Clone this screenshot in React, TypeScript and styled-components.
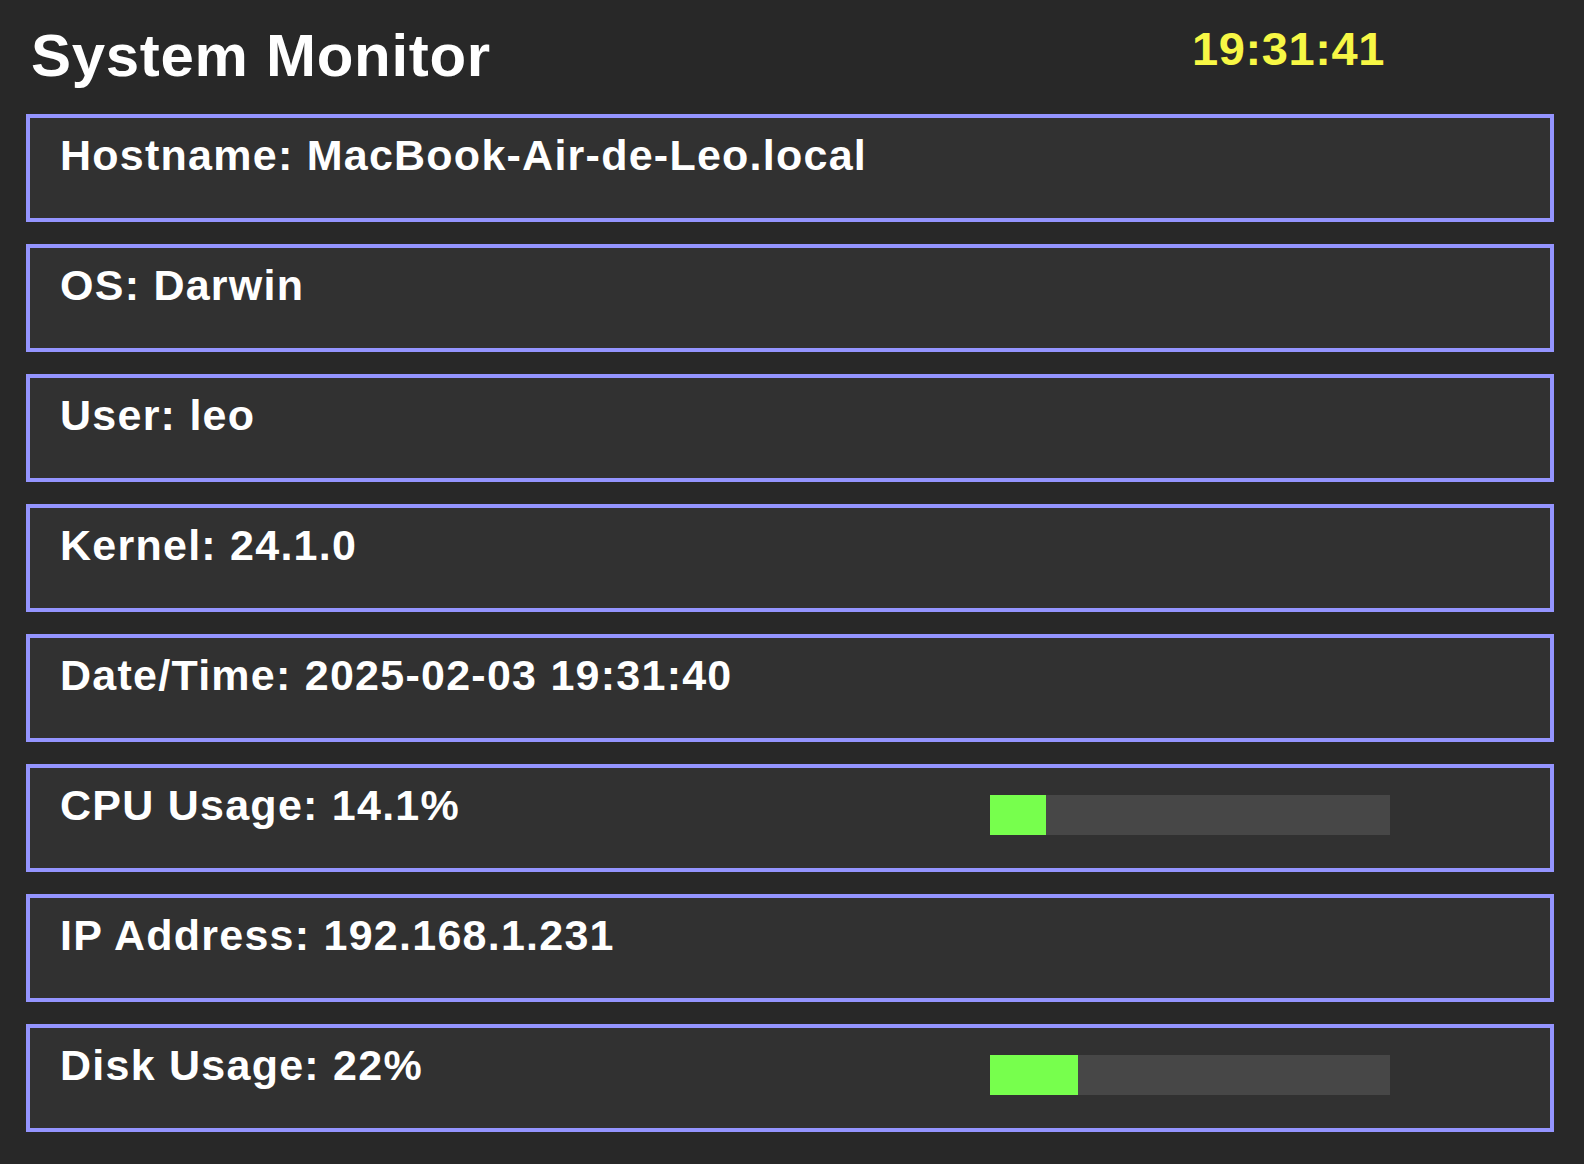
import React from "react";
import styled, { createGlobalStyle } from "styled-components";

const GlobalStyle = createGlobalStyle`
  html, body {
    margin: 0;
    padding: 0;
    background: #282828;
  }
  body {
    font-family: "Liberation Sans", Arial, Helvetica, sans-serif;
    color: #ffffff;
  }
`;

const Page = styled.div`
  min-height: 100vh;
  box-sizing: border-box;
  padding: 0 30px 32px 26px;
  background: #282828;
`;

const Header = styled.header`
  height: 114px;
  display: grid;
  grid-template-columns: 1161px auto;
  align-items: start;
  padding-left: 5px;
  box-sizing: border-box;
`;

const Title = styled.h1`
  margin: 26px 0 0 0;
  font-size: 60px;
  line-height: 60px;
  font-weight: 700;
  letter-spacing: 0.7px;
  color: #ffffff;
`;

const Clock = styled.div`
  margin-top: 25px;
  font-size: 47px;
  line-height: 47px;
  font-weight: 700;
  letter-spacing: 0.6px;
  color: #f7f745;
`;

const List = styled.div`
  display: flex;
  flex-direction: column;
  gap: 22px;
`;

const InfoBox = styled.div`
  height: 108px;
  box-sizing: border-box;
  border: 4px solid #9494ff;
  background: #313131;
  padding: 12px 30px 0 30px;
  display: grid;
  grid-template-columns: 930px 400px;
  align-items: start;
`;

const Label = styled.div`
  font-size: 43px;
  line-height: 50px;
  font-weight: 700;
  letter-spacing: 1.25px;
  white-space: nowrap;
  color: #ffffff;
`;

const Track = styled.div`
  margin-top: 15px;
  height: 40px;
  width: 400px;
  background: #474747;
  display: flex;
`;

const Fill = styled.div`
  height: 100%;
  background: #77ff4d;
`;

type Row = { label: string; percent?: number };

const rows: Row[] = [
  { label: "Hostname: MacBook-Air-de-Leo.local" },
  { label: "OS: Darwin" },
  { label: "User: leo" },
  { label: "Kernel: 24.1.0" },
  { label: "Date/Time: 2025-02-03 19:31:40" },
  { label: "CPU Usage: 14.1%", percent: 14.1 },
  { label: "IP Address: 192.168.1.231" },
  { label: "Disk Usage: 22%", percent: 22 },
];

export default function App() {
  return (
    <>
      <GlobalStyle />
      <Page>
        <Header>
          <Title>System Monitor</Title>
          <Clock>19:31:41</Clock>
        </Header>
        <List>
          {rows.map((r) => (
            <InfoBox key={r.label}>
              <Label>{r.label}</Label>
              {r.percent !== undefined && (
                <Track>
                  <Fill style={{ width: `${r.percent}%` }} />
                </Track>
              )}
            </InfoBox>
          ))}
        </List>
      </Page>
    </>
  );
}
